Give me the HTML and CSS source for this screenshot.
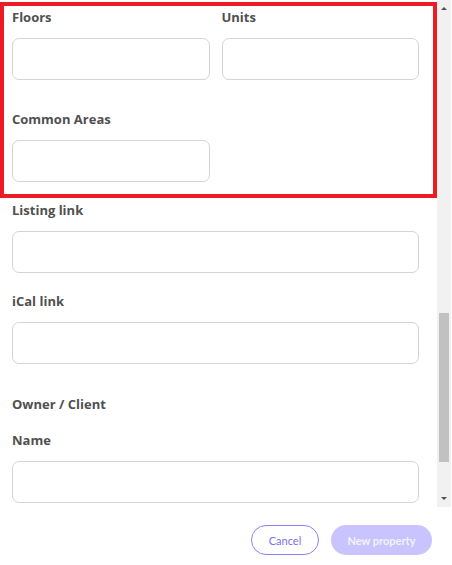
FILE: index.html
```html
<!DOCTYPE html>
<html lang="en">
<head>
    <meta charset="UTF-8">
    <meta name="viewport" content="width=device-width, initial-scale=1.0">
    <title>New property</title>
    <link rel="stylesheet" href="styles.css">
</head>
<body>

<div class="dialog">
    <div class="scroll-area">
        <form class="form-body" id="propertyForm">
            <div class="grid highlight">
                <div class="field">
                    <label for="floors">Floors</label>
                    <input type="text" id="floors">
                </div>
                <div class="field">
                    <label for="units">Units</label>
                    <input type="text" id="units">
                </div>
                <div class="field">
                    <label for="commonAreas">Common Areas</label>
                    <input type="text" id="commonAreas">
                </div>
            </div>

            <div class="field">
                <label for="listingLink">Listing link</label>
                <input type="text" id="listingLink">
            </div>

            <div class="field">
                <label for="icalLink">iCal link</label>
                <input type="text" id="icalLink">
            </div>

            <h3 class="section-title">Owner / Client</h3>

            <div class="field">
                <label for="ownerName">Name</label>
                <input type="text" id="ownerName">
            </div>
        </form>

        <div class="scrollbar">
            <div class="scroll-btn"><span class="arrow-up"></span></div>
            <div class="scroll-track">
                <div class="scroll-thumb"></div>
            </div>
            <div class="scroll-btn"><span class="arrow-down"></span></div>
        </div>
    </div>

    <footer class="actions">
        <button type="button" class="btn-cancel">Cancel</button>
        <button type="button" class="btn-primary" disabled>New property</button>
    </footer>
</div>

</body>
</html>
```

FILE: styles.css
```css
body {
    font-family: "Open Sans", Arial, sans-serif;
    margin: 0;
    padding: 0;
    background-color: #ffffff;
    color: #505050;
}
.dialog {
    width: 452px;
    height: 565px;
    display: flex;
    flex-direction: column;
    overflow: hidden;
}
.scroll-area {
    height: 507px;
    display: flex;
    overflow: hidden;
}
.form-body {
    width: 437px;
    box-sizing: border-box;
    padding: 8px 18px 0 12px;
    margin: 0;
}
.grid {
    display: grid;
    grid-template-columns: 1fr 1fr;
    column-gap: 12px;
    row-gap: 30px;
    margin-bottom: 19px;
}
/* red annotation frame around the first group */
.highlight {
    position: relative;
}
.highlight::after {
    content: "";
    position: absolute;
    top: -6px;
    left: -12px;
    right: -18px;
    bottom: -16px;
    border: 4px solid #ed1c24;
    pointer-events: none;
}
.field {
    margin-bottom: 19px;
}
.grid .field {
    margin-bottom: 0;
}
label, .section-title {
    display: block;
    font-size: 13px;
    line-height: 18px;
    font-weight: 700;
    color: #505050;
}
label {
    margin-bottom: 12px;
}
.section-title {
    margin: 31px 0 18px;
}
input {
    display: block;
    width: 100%;
    height: 42px;
    box-sizing: border-box;
    border: 1px solid #d4d4d4;
    border-radius: 7px;
    padding: 0 12px;
    font-family: inherit;
    font-size: 13px;
    background: #ffffff;
    outline: none;
}
.scrollbar {
    width: 14px;
    background: #f1f1f1;
    display: flex;
    flex-direction: column;
}
.scroll-btn {
    height: 17px;
    display: flex;
    align-items: center;
    justify-content: center;
}
.arrow-up, .arrow-down {
    width: 0;
    height: 0;
    border-left: 3px solid transparent;
    border-right: 3px solid transparent;
}
.arrow-up {
    border-bottom: 3px solid #505050;
}
.arrow-down {
    border-top: 3px solid #505050;
}
.scroll-track {
    flex: 1;
}
.scroll-thumb {
    margin: 296px 0 0 2px;
    width: 10px;
    height: 149px;
    background: #c1c1c1;
}
.actions {
    flex: 1;
    display: flex;
    justify-content: flex-end;
    align-items: flex-start;
    gap: 12px;
    padding: 18px 20px 0 0;
}
.actions button {
    height: 30px;
    border-radius: 15px;
    font-family: Lato, "Open Sans", sans-serif;
    font-size: 11px;
    cursor: pointer;
}
.btn-cancel {
    width: 68px;
    background: #ffffff;
    border: 1px solid #8b80f6;
    color: #7a6ff0;
}
.btn-primary {
    width: 101px;
    background: #c9c4fd;
    border: none;
    color: #f3f1ff;
    font-weight: 700;
}
```
